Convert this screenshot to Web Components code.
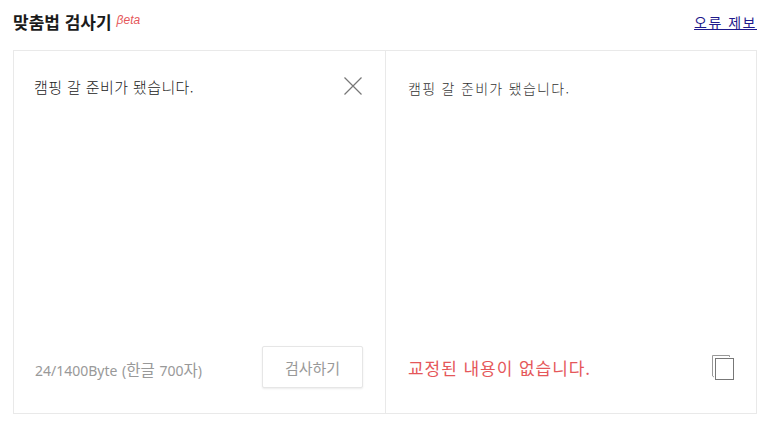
<!DOCTYPE html>
<html lang="ko">
<head>
<meta charset="utf-8">
<title>맞춤법 검사기</title>
<style>
  html, body { margin: 0; padding: 0; background: #fff; }
  body { font-family: "Noto Sans CJK KR", "Noto Sans", sans-serif; }
</style>
</head>
<body>
<spell-checker>
  <check-header slot="header"></check-header>
  <input-pane slot="left"></input-pane>
  <result-pane slot="right"></result-pane>
</spell-checker>

<script>
let wrapFn = text => {
  let tmpl = document.createElement('template')
  tmpl.innerHTML = text
  return document.importNode(tmpl.content, true)
}

class SpellChecker extends HTMLElement {
  constructor () {
    super()
    this.attachShadow({mode: 'open'})
  }

  connectedCallback () {
    this.shadowRoot.appendChild(wrapFn(`
      <style>
      :host { display: block; box-sizing: border-box; width: 766px; height: 425px; padding: 0 9px 11px 13px; }
      .box {
        display: grid;
        grid-template-columns: 372px 372px;
        height: 364px;
        box-sizing: border-box;
        border: 1px solid #e9e9e9;
      }
      </style>
      <slot name="header"></slot>
      <div class="box">
        <slot name="left"></slot>
        <slot name="right"></slot>
      </div>`))
  }
}

class CheckHeader extends HTMLElement {
  constructor () {
    super()
    this.attachShadow({mode: 'open'})
  }

  connectedCallback () {
    this.shadowRoot.appendChild(wrapFn(`
      <style>
      :host { display: flex; justify-content: space-between; align-items: flex-start; height: 50px; box-sizing: border-box; padding-top: 10px; }
      .title { display: flex; align-items: flex-start; }
      h1 { margin: 0; font-size: 17px; line-height: 24px; font-weight: 700; color: #1a1a1a; }
      i { font: italic 12px/14px "Liberation Sans", sans-serif; color: #e5575a; margin: 3px 0 0 5px; }
      a { font-size: 14px; line-height: 24px; letter-spacing: 1.5px; color: #1f1a8c; text-decoration: underline; }
      </style>
      <div class="title"><h1>맞춤법 검사기</h1><i>βeta</i></div>
      <a href="#">오류 제보</a>`))
  }
}

class InputPane extends HTMLElement {
  constructor () {
    super()
    this.attachShadow({mode: 'open'})
  }

  connectedCallback () {
    this.shadowRoot.appendChild(wrapFn(`
      <style>
      :host { display: flex; flex-direction: column; justify-content: space-between; box-sizing: border-box; height: 100%; padding: 24px 22px 25px 20px; border-right: 1px solid #e9e9e9; }
      .top { display: flex; justify-content: space-between; align-items: flex-start; }
      p { margin: 0; font-size: 15px; line-height: 24px; letter-spacing: .4px; color: #222; font-weight: 300; }
      svg { display: block; }
      .foot { display: flex; justify-content: space-between; align-items: center; }
      span { font-family: "Noto Sans", "Noto Sans CJK KR", sans-serif; font-size: 14px; word-spacing: 1px; color: #999; margin: 5px 0 0 1px; }
      b { font-size: 15.5px; font-weight: 400; }
      button { width: 101px; height: 42px; padding: 0; font: inherit; font-size: 15px; color: #999; background: #fff; border: 1px solid #e6e6e6; border-radius: 2px; box-shadow: 0 1px 2px rgba(0,0,0,.08); }
      </style>
      <div class="top">
        <p>캠핑 갈 준비가 됐습니다.</p>
        <svg width="20" height="20" viewBox="0 0 20 20" style="margin-top:1px"><path d="M1.5 1.5 18.5 18.5M18.5 1.5 1.5 18.5" stroke="#777" stroke-width="1.2" fill="none"/></svg>
      </div>
      <div class="foot">
        <span>24/1400Byte (<b>한글</b> 700<b>자</b>)</span>
        <button type="button">검사하기</button>
      </div>`))
  }
}

class ResultPane extends HTMLElement {
  constructor () {
    super()
    this.attachShadow({mode: 'open'})
  }

  connectedCallback () {
    this.shadowRoot.appendChild(wrapFn(`
      <style>
      :host { display: flex; flex-direction: column; justify-content: space-between; box-sizing: border-box; height: 100%; padding: 25px 23px 32px 22px; }
      p { margin: 0; font-size: 14px; line-height: 24px; letter-spacing: 1.3px; color: #333; font-weight: 300; }
      .foot { display: flex; justify-content: space-between; align-items: center; }
      span { font-size: 17px; letter-spacing: .95px; color: #e5575a; }
      svg { display: block; }
      </style>
      <p>캠핑 갈 준비가 됐습니다.</p>
      <div class="foot">
        <span>교정된 내용이 없습니다.</span>
        <svg width="24" height="27" viewBox="0 0 24 27" fill="none"><path d="M18.5 3V1.5H1.5V22L3 23" stroke="#999"/><rect x="4.5" y="4.5" width="18" height="21" stroke="#777"/></svg>
      </div>`))
  }
}

customElements.define('spell-checker', SpellChecker)
customElements.define('check-header', CheckHeader)
customElements.define('input-pane', InputPane)
customElements.define('result-pane', ResultPane)
</script>
</body>
</html>
